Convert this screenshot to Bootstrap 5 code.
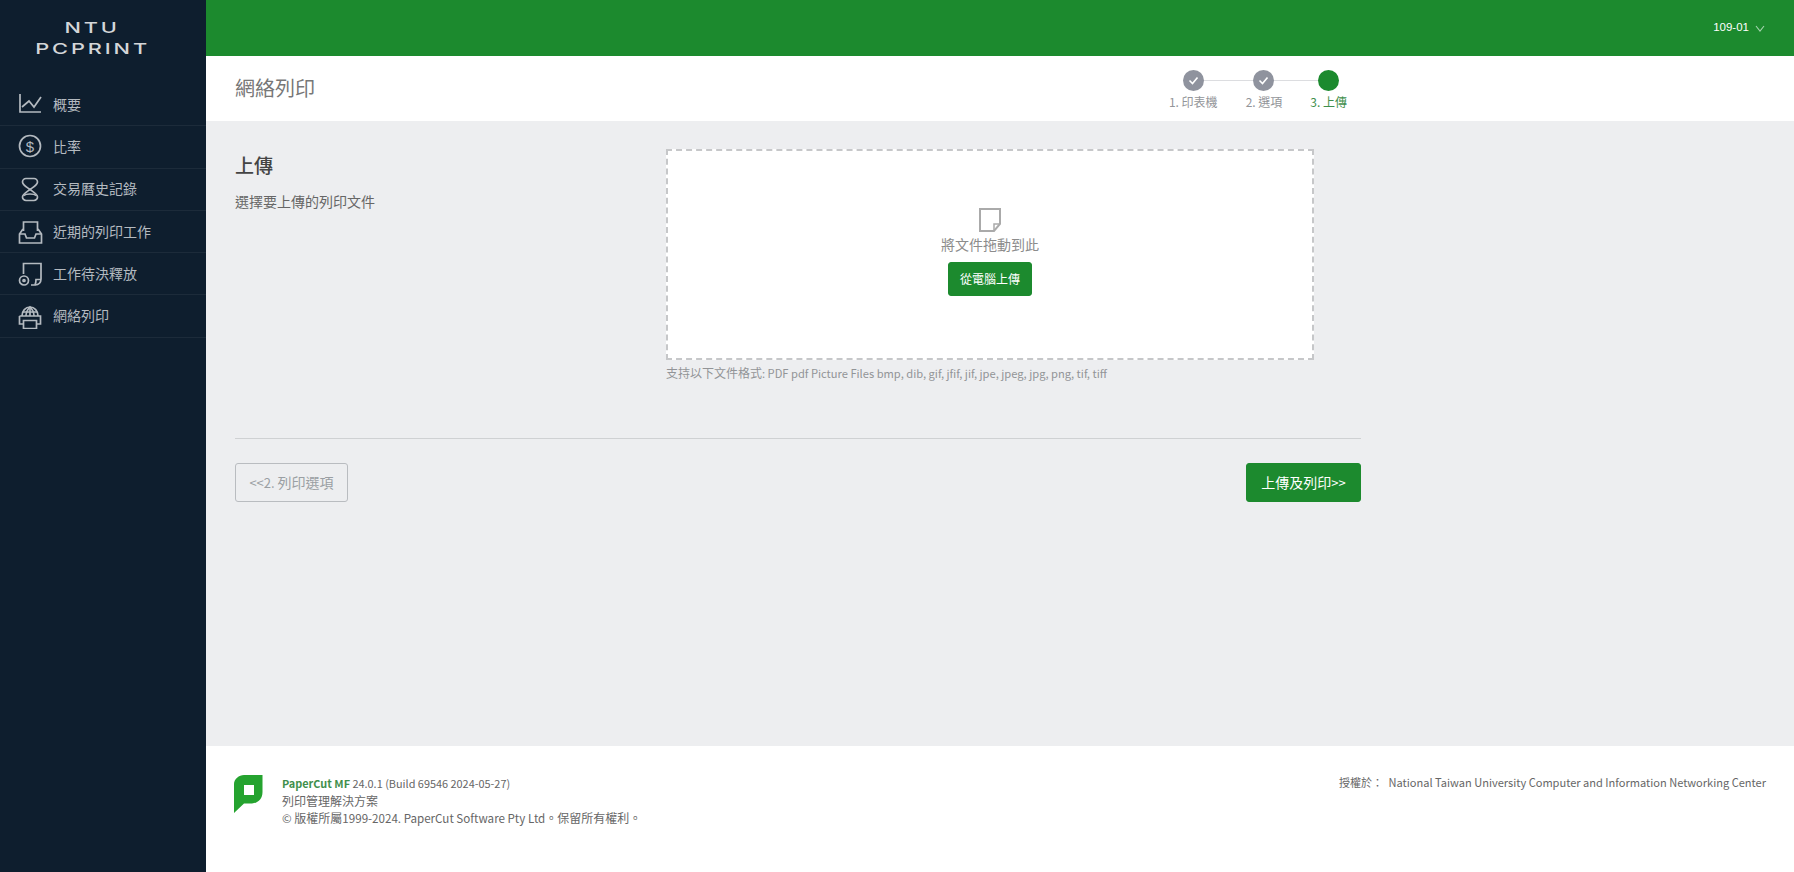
<!DOCTYPE html>
<html lang="zh-Hant">
<head>
    <meta charset="UTF-8">
    <meta name="viewport" content="width=device-width, initial-scale=1.0">
    <title>網絡列印</title>

    <!-- Bootstrap CSS -->
    <link href="https://cdn.jsdelivr.net/npm/bootstrap@5.3.0/dist/css/bootstrap.min.css" rel="stylesheet">

    <style>
        body {
            font-family: "Noto Sans CJK TC", "Noto Sans", sans-serif;
            background-color: #edeef0;
            color: #666;
            font-size: 14px;
        }
        .lat { font-size: 11.15px; }
        .side-bar {
            width: 206px;
            background-color: #0e1e2e;
            flex-shrink: 0;
        }
        .side-logo {
            height: 84px;
            padding: 17px 21px 0 0;
            text-align: center;
        }
        .side-logo span {
            display: inline-block;
            transform: scaleX(1.45);
            color: #d4d6d8;
            font-family: "Inter", sans-serif;
            font-weight: 500;
            font-size: 15px;
            line-height: 19.5px;
            letter-spacing: 2px;
        }
        .side-link {
            height: 42.3px;
            padding-left: 17px;
            padding-bottom: 1px;
            color: #b4bac0;
            border-bottom: 1px solid #1c2b3a;
            text-decoration: none;
            font-size: 14px;
        }
        .side-link svg {
            width: 26px;
            height: 26px;
            margin-right: 10px;
            fill: none;
            stroke: #b4bac0;
            stroke-width: 1.7;
        }
        .side-link text {
            fill: #b4bac0;
            stroke: none;
            font-size: 15px;
            font-family: "Liberation Sans", sans-serif;
        }
        .top-strip {
            height: 56px;
            background-color: #1c8a2e;
            color: #fff;
            padding-right: 29px;
            font-family: "Liberation Sans", sans-serif;
            font-size: 11.5px;
        }
        .top-strip svg { width: 10px; height: 7px; margin-left: 6px; }
        .title-strip {
            height: 65px;
            background-color: #fff;
            padding-left: 29px;
        }
        .strip-inner { width: 1126px; }
        .page-title { font-size: 20px; color: #777; font-weight: 400; margin-top: -2px; }
        .step-list { gap: 28px; padding-right: 14px; padding-top: 3px; }
        .step-item {
            position: relative;
            font-size: 12px;
            line-height: 16px;
            color: #939599;
            text-align: center;
        }
        .step-item + .step-item::before {
            content: "";
            position: absolute;
            top: 10px;
            right: 50%;
            width: 64px;
            height: 1px;
            background-color: #dcdde0;
        }
        .step-dot {
            position: relative;
            z-index: 1;
            width: 21px;
            height: 21px;
            margin: 0 auto 3px;
            border-radius: 50%;
            background-color: #8f939e;
        }
        .step-dot svg { width: 21px; height: 21px; display: block; }
        .step-now { color: #3f8f4c; }
        .step-now .step-dot { background-color: #1c8a2e; }
        .page-body { padding: 28px 0 0 29px; }
        .body-inner { width: 1126px; }
        .upload-side { width: 431px; flex-shrink: 0; }
        .upload-head { font-size: 19px; font-weight: 500; color: #444; margin: 2px 0 12px; line-height: 28px; }
        .upload-desc { font-size: 14px; color: #666; margin: 0; line-height: 20px; }
        .drop-zone {
            width: 648px;
            height: 211px;
            background-color: #fff;
            border: 2px dashed #c6c7c9;
            padding-top: 57px;
            text-align: center;
            color: #8c8c8c;
        }
        .drop-zone svg { width: 24px; height: 24px; display: block; margin: 0 auto 2px; }
        .drop-text { font-size: 14px; line-height: 20px; margin-bottom: 8px; }
        .btn-green {
            background-color: #1c8a2e;
            border-color: #1c8a2e;
            color: #fff;
            border-radius: 3px;
        }
        .btn-green:hover { background-color: #176f25; border-color: #176f25; color: #fff; }
        .btn-pick { width: 84px; height: 34px; font-size: 12px; padding: 0; }
        .file-hint { font-size: 12px; color: #929497; line-height: 16px; margin-top: 5px; }
        .page-rule { margin: 57px 0 24px; border-top: 1px solid #cfd1d3; opacity: 1; }
        .btn-back {
            width: 113px;
            height: 39px;
            font-size: 14px;
            padding: 0;
            color: #9a9fa3;
            border: 1px solid #b9bcc0;
            border-radius: 3px;
            background-color: transparent;
        }
        .btn-send { width: 115px; height: 39px; font-size: 14px; padding: 0; }
        .btn-back .lat, .btn-send .lat { font-size: 13px; }
        .page-foot {
            height: 126px;
            background-color: #fff;
            padding: 28px 28px 0 28px;
            font-size: 12px;
            line-height: 17px;
            color: #666;
        }
        .page-foot svg { width: 30px; height: 39px; margin: 1px 18px 0 0; flex-shrink: 0; }
        .brand-name { color: #3f8f4c; font-weight: 700; }
        .foot-build { font-size: 10.9px; }
        .foot-copy { font-size: 11.6px; }
        .foot-licence { font-size: 11px; }
        .foot-licence .lat { font-size: 11.05px; margin-left: 3px; }
    </style>
</head>
<body>

<div class="d-flex min-vh-100">
    <!-- Sidebar -->
    <aside class="side-bar d-flex flex-column">
        <div class="side-logo"><span>NTU</span><br><span>PCPRINT</span></div>
        <a class="side-link d-flex align-items-center" href="#">
            <svg viewBox="0 0 26 26"><path d="M3 3V21H24"/><path d="M5 16L12 10L17 16L24 6"/></svg>
            概要
        </a>
        <a class="side-link d-flex align-items-center" href="#">
            <svg viewBox="0 0 26 26"><circle cx="13" cy="13" r="10.5"/><text x="13" y="18.5" text-anchor="middle">$</text></svg>
            比率
        </a>
        <a class="side-link d-flex align-items-center" href="#">
            <svg viewBox="0 0 26 26"><path d="M9 2.500h8a3.500 3.500 0 0 1 3.500 3.500c0 3-4 5-7.500 7.500 3.500 2.500 7.500 4.500 7.500 7.500a3.500 3.500 0 0 1-3.500 3.500H9a3.500 3.500 0 0 1-3.500-3.500c0-3 4-5 7.500-7.500C9.500 11 5.500 9 5.500 6A3.500 3.500 0 0 1 9 2.500z"/><path d="M6.500 19.500c3-2 10-2 13 0"/></svg>
            交易曆史記錄
        </a>
        <a class="side-link d-flex align-items-center" href="#">
            <svg viewBox="0 0 26 26"><path d="M6.500 13V4H20.500V13"/><path d="M6 11L2.500 16V25H24.500V16L21 11"/><path d="M2.500 16H8L9.500 20H17.500L19 16H24.500"/></svg>
            近期的列印工作
        </a>
        <a class="side-link d-flex align-items-center" href="#">
            <svg viewBox="0 0 26 26"><path d="M6.500 14V3.500H24V19C24 22 22 25 18 25H14"/><path d="M18 25C19 23 19 21 19 19.500H24"/><circle cx="7" cy="20.500" r="4.500"/><circle cx="7" cy="20.500" r="1"/></svg>
            工作待決釋放
        </a>
        <a class="side-link d-flex align-items-center" href="#">
            <svg viewBox="0 0 26 26"><path d="M5 13C5 8 8.500 4 13 4S21 8 21 13"/><path d="M9 13C9 9 11 6 13 4C15 6 17 9 17 13"/><path d="M13 4V13M6 9H20"/><path d="M2.500 13H23.500V21H19.500M6.500 21H2.500V13"/><path d="M6.500 17.500H19.500V25.500H6.500Z"/></svg>
            網絡列印
        </a>
    </aside>

    <div class="flex-grow-1 d-flex flex-column">
        <!-- Top bar -->
        <div class="top-strip d-flex justify-content-end align-items-center">
            109-01
            <svg viewBox="0 0 10 7"><path d="M1 1L5 6L9 1" fill="none" stroke="#a5d4ae" stroke-width="1.1"/></svg>
        </div>

        <!-- Title and steps -->
        <div class="title-strip">
            <div class="strip-inner h-100 d-flex justify-content-between align-items-center">
                <div class="page-title">網絡列印</div>
                <div class="step-list d-flex">
                    <div class="step-item">
                        <div class="step-dot"><svg viewBox="0 0 21 21"><path d="M6.500 10.500L9.500 13.500L14.500 7.500" fill="none" stroke="#fff" stroke-width="1.6"/></svg></div>
                        1. 印表機
                    </div>
                    <div class="step-item">
                        <div class="step-dot"><svg viewBox="0 0 21 21"><path d="M6.500 10.500L9.500 13.500L14.500 7.500" fill="none" stroke="#fff" stroke-width="1.6"/></svg></div>
                        2. 選項
                    </div>
                    <div class="step-item step-now">
                        <div class="step-dot"></div>
                        3. 上傳
                    </div>
                </div>
            </div>
        </div>

        <!-- Upload -->
        <div class="page-body flex-grow-1">
            <div class="body-inner">
                <div class="d-flex">
                    <div class="upload-side">
                        <h2 class="upload-head">上傳</h2>
                        <p class="upload-desc">選擇要上傳的列印文件</p>
                    </div>
                    <div>
                        <div class="drop-zone">
                            <svg viewBox="0 0 24 24"><path d="M2 1H22V16L16 23H2Z" fill="none" stroke="#aaa" stroke-width="2"/><path d="M16 22V16H22" fill="none" stroke="#aaa" stroke-width="1.5"/></svg>
                            <div class="drop-text">將文件拖動到此</div>
                            <button type="button" class="btn btn-green btn-pick">從電腦上傳</button>
                        </div>
                        <div class="file-hint">支持以下文件格式<span class="lat">: PDF pdf Picture Files bmp, dib, gif, jfif, jif, jpe, jpeg, jpg, png, tif, tiff</span></div>
                    </div>
                </div>
                <hr class="page-rule">
                <div class="d-flex justify-content-between">
                    <button type="button" class="btn btn-back"><span class="lat">&lt;&lt;2. </span>列印選項</button>
                    <button type="button" class="btn btn-green btn-send">上傳及列印<span class="lat">&gt;&gt;</span></button>
                </div>
            </div>
        </div>

        <!-- Footer -->
        <footer class="page-foot d-flex justify-content-between">
            <div class="d-flex">
                <svg viewBox="0 0 30 39"><path fill-rule="evenodd" d="M10 0H28.500V17C28.500 24 24 28 18 28.500H10L0 38V9C0 4 5 0 10 0ZM10 10V20H20V10Z" fill="#25a32f"/></svg>
                <div>
                    <span class="foot-build"><span class="brand-name">PaperCut MF</span> 24.0.1 (Build 69546 2024-05-27)</span><br>
                    列印管理解決方案<br>
                    <span class="foot-copy">©</span> 版權所屬<span class="foot-copy">1999-2024. PaperCut Software Pty Ltd</span>。保留所有權利。
                </div>
            </div>
            <div class="foot-licence">授權於： <span class="lat">National Taiwan University Computer and Information Networking Center</span></div>
        </footer>
    </div>
</div>

<script src="https://cdn.jsdelivr.net/npm/bootstrap@5.3.0/dist/js/bootstrap.bundle.min.js"></script>
</body>
</html>
